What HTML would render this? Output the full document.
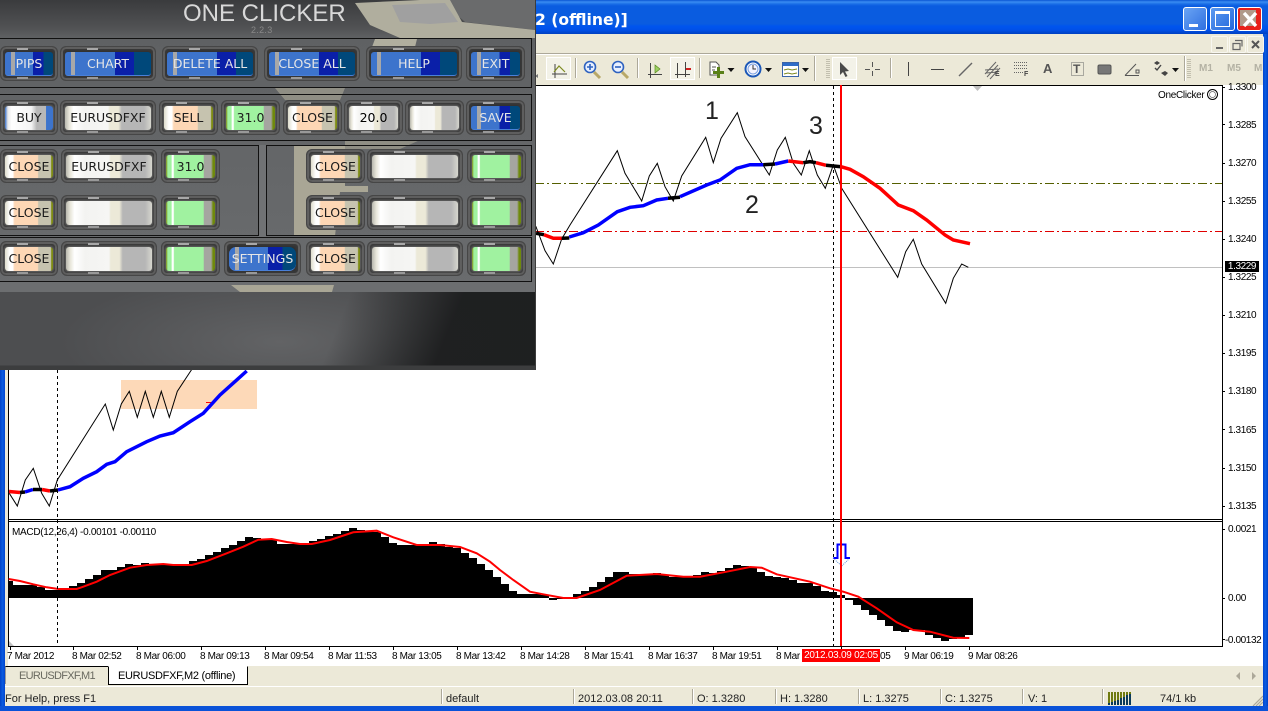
<!DOCTYPE html>
<html><head><meta charset="utf-8"><style>
html,body{margin:0;padding:0;background:#ece9d8}
body{width:1268px;height:711px;overflow:hidden;position:relative;font-family:"Liberation Sans",sans-serif;color:#000}
.a{position:absolute}
.t{position:absolute;font-size:10px;letter-spacing:-.35px;line-height:12px;white-space:nowrap}
.p{left:1228px;font-size:10px;letter-spacing:-.4px;margin-top:2px}
.s{position:absolute;top:693px;font-size:11px;line-height:13px;color:#222;white-space:nowrap}
.d{position:absolute;top:689px;height:15px;width:1px;background:#aca899;border-right:1px solid #fff}
.tog{position:absolute;top:57px;height:21px;background:#f3f2e8;border:1px solid #fff;outline:0}
.sep{position:absolute;top:58px;height:20px;width:1px;background:#aca899;border-right:1px solid #fff}
.win{position:absolute;top:7px;height:22px;border:1px solid #fff;border-radius:3px}
.mdi{position:absolute;top:36px;width:15px;height:15px;border:1px solid #f8f7f0;border-radius:2px}
.b{position:absolute;box-sizing:border-box;border-radius:6px;border:1px solid #464646;background:#2c2c2c;box-shadow:inset 0 0 0 2px #5e5e5e,inset 0 0 4px 4px #3c3c3c}
.b:before{content:"";position:absolute;left:28%;top:1px;width:11px;height:2px;background:#a8a8a8}
.b:after{content:"";position:absolute;left:28%;bottom:1px;width:11px;height:2px;background:#999}
.r1{top:46px;height:35px}.r2{top:100px;height:35px}.r3{top:149px;height:34px}.r4{top:195px;height:35px}.r5{top:241px;height:35px}
.i{position:absolute;left:4px;right:4px;top:5px;bottom:4px;border-radius:3px;text-align:center;font:12.5px/24px "DejaVu Sans",sans-serif;color:#1c1c1c;white-space:nowrap;box-sizing:border-box;box-shadow:0 0 2px 1px rgba(170,170,170,.45)}
.bl{color:#e6e6e6;background:linear-gradient(90deg,#3d74cc 0 6px,#a8a8a8 6px 10px,#3d74cc 10px 58%,#0a1fa8 58% 80%,#00487a 80% 100%);border-bottom:1px solid #4a80d8;box-shadow:none}
.wh{background:linear-gradient(90deg,#b8b8ae 0,#e8e6da 5%,#fff 10%,#f3f3f1 22%,#f6f6f4 50%,#ece9d8 52% 62%,#b6b6b6 66% 92%,#d6d6ce 100%)}
.pe{background:linear-gradient(90deg,#dedccc 0,#fff 10% 16%,#fdd7b5 20% 68%,#c6c3af 70% 95%,#7e8c14 97%)}
.gr{background:linear-gradient(90deg,#7e8c14 0,#a0f2a0 4% 11%,#fff 12% 15%,#a0f2a0 17% 76%,#a5a5a0 78% 92%,#6f8a0c 96%)}
.buy{background:linear-gradient(90deg,#3d74cc 0,#e8e8e8 6%,#fff 14%,#f4f4f4 55%,#b8b8b8 66% 85%,#3d74cc 86%)}
.fr{position:absolute;box-sizing:border-box;border:1px solid #111}
</style></head><body>

<!-- title bar -->
<div class="a" style="left:0;top:0;width:1268px;height:34px;background:linear-gradient(180deg,#0a56d4 0,#3a8cf2 2px,#1a6ee6 4px,#0a5ce0 6px,#0a5ce0 24px,#0055ee 26px,#0050e8 30px,#0040c0 34px)"></div>
<div class="a" style="left:535px;top:9px;font:bold 15.6px/22px 'DejaVu Sans',sans-serif;color:#fff;white-space:nowrap">2 (offline)]</div>

<!-- window buttons -->
<div class="win" style="left:1183px;width:22px;background:linear-gradient(135deg,#6aa4f4,#2f6fe0)"><div class="a" style="left:5px;top:16px;width:9px;height:3px;background:#fff"></div></div>
<div class="win" style="left:1210px;width:23px;background:linear-gradient(135deg,#5c9af0,#2468dc)"><div class="a" style="left:4px;top:3px;border:1px solid #fff;border-top:3px solid #fff;box-sizing:border-box;width:15px;height:16px"></div></div>
<div class="win" style="left:1237px;width:23px;background:#e8211a;overflow:hidden">
<svg class="a" style="left:0;top:0" width="23" height="22"><rect x="2" y="2" width="16" height="16" fill="#b09a8a"/><path d="M6 5L18 18M18 5L6 18" stroke="#fff" stroke-width="3.4"/></svg></div>

<!-- left/right/bottom blue -->
<div class="a" style="left:0;top:34px;width:5px;height:677px;background:linear-gradient(90deg,#0040c8,#0a5ce0 50%,#0044d0)"></div>
<div class="a" style="left:1263px;top:34px;width:5px;height:677px;background:linear-gradient(90deg,#0044d0,#0a5ce0 50%,#0040c8)"></div>
<div class="a" style="left:0;top:706px;width:1268px;height:5px;background:#0a52d8"></div>

<!-- toolbar lines -->
<div class="a" style="left:5px;top:53px;width:1258px;height:1px;background:#aca899"></div>
<div class="a" style="left:5px;top:54px;width:1258px;height:1px;background:#fff"></div>

<div class="mdi" style="left:1211px"><svg width="15" height="15"><rect x="4" y="10" width="7" height="2" fill="#666"/></svg></div>
<div class="mdi" style="left:1229px"><svg width="15" height="15"><path d="M5 3.5h7v6M3 6.5h7v6H3z" fill="none" stroke="#666" stroke-width="1.2"/></svg></div>
<div class="mdi" style="left:1247px"><svg width="15" height="15"><path d="M4 4L11 11M11 4L4 11" stroke="#555" stroke-width="2"/></svg></div>

<div class="tog" style="left:546px;width:23px"></div>
<div class="tog" style="left:670px;width:23px"></div>
<div class="tog" style="left:832px;width:23px"></div>
<div class="sep" style="left:575px"></div><div class="sep" style="left:637px"></div><div class="sep" style="left:699px"></div><div class="sep" style="left:890px"></div>
<div class="a" style="left:814px;top:56px;height:25px;width:1px;background:#aca899;border-right:1px solid #fff"></div>
<div class="a" style="left:1184px;top:56px;height:25px;width:1px;background:#aca899;border-right:1px solid #fff"></div>

<svg class="a" style="left:0;top:54px" width="1268" height="31" viewBox="0 54 1268 31">
<!-- chart mode -->
<path d="M555 64V78M552 74H567" stroke="#444" fill="none"/><path d="M554 72L559 66L565 72" stroke="#7d8a20" fill="none" stroke-width="1.2"/>
<path d="M535 76l3-2v4z" fill="#777"/>
<!-- zoom in -->
<path d="M594 72L600 78" stroke="#b8a868" stroke-width="3"/><circle cx="590" cy="67" r="5.5" fill="#e8f0ff" stroke="#2e62c0" stroke-width="1.6"/><path d="M587 67h6M590 64v6" stroke="#2e62c0" stroke-width="1.6"/>
<!-- zoom out -->
<path d="M622 72L628 78" stroke="#b8a868" stroke-width="3"/><circle cx="618" cy="67" r="5.5" fill="#e8f0ff" stroke="#2e62c0" stroke-width="1.6"/><path d="M615 67h6" stroke="#2e62c0" stroke-width="1.6"/>
<!-- autoscroll -->
<path d="M650.5 63V78M648 74.5H662" stroke="#444" fill="none"/><path d="M655 65L660 69L655 73z" fill="#9cd060" stroke="#5a8a20" stroke-width=".7"/>
<!-- shift -->
<path d="M677.5 63V78M675 74.5H690M685.5 62V77" stroke="#444" fill="none"/><path d="M686 69h5" stroke="#d02020" stroke-width="2"/>
<!-- new indicator -->
<path d="M710 62h6l3 3v10h-9z" fill="#fff" stroke="#555"/><path d="M712 67h4M712 70h3" stroke="#555"/>
<path d="M717 67h3v4h4v3h-4v4h-3v-4h-4v-3h4z" fill="#5a8018"/>
<!-- clock -->
<circle cx="753" cy="69" r="7.5" fill="#fff" stroke="#1c58b8" stroke-width="2"/><circle cx="753" cy="69" r="5" fill="#f4f4ff" stroke="#7aa0e0"/><path d="M753 65v4h3" stroke="#333" fill="none"/>
<!-- template -->
<rect x="782.500" y="62.500" width="16" height="14" fill="#fff" stroke="#3a64a8"/><rect x="783" y="63" width="15" height="3" fill="#2e6cc8"/><path d="M784 70l4-1 4 1 5-1M784 74l4-1 4 1 5-1" stroke="#7d8a20" fill="none"/>
<!-- dropdowns -->
<path d="M727.500 68h7l-3.500 4zM765 68h7l-3.500 4zM802 68h7l-3.500 4zM1172 68h7l-3.500 4z" fill="#111"/>
<!-- grips -->
<path d="M826 59.500h4M826 61.500h4M826 63.500h4M826 65.500h4M826 67.500h4M826 69.500h4M826 71.500h4M826 73.500h4M826 75.500h4M826 77.500h4M1187 59.500h4M1187 61.500h4M1187 63.500h4M1187 65.500h4M1187 67.500h4M1187 69.500h4M1187 71.500h4M1187 73.500h4M1187 75.500h4M1187 77.500h4" stroke="#c2bfae"/>
<!-- cursor -->
<path d="M840 62L840 75L843 72L845.500 77L847.500 76L845 71.500L849 71z" fill="#4a4a4a"/>
<!-- cross -->
<path d="M872.500 62v5M872.500 71v5M865 69.500h5M875 69.500h5" stroke="#555"/>
<!-- lines -->
<path d="M908.500 62v14" stroke="#444"/><path d="M931 69.500h13" stroke="#444"/><path d="M959 76L972 63" stroke="#666" stroke-width="1.400"/>
<!-- channel -->
<path d="M985 74L996 62M987 77L998 65M990 79L1000 68M985 70L998 69M986 73L998 72" stroke="#666" fill="none"/>
<!-- fib -->
<path d="M1014 62.500h14M1014 65.500h14M1014 68.500h14M1014 72.500h9" stroke="#666" stroke-dasharray="1 1"/>
<!-- text box -->
<rect x="1071.500" y="62.500" width="12" height="13" fill="none" stroke="#666" stroke-dasharray="1 1"/>
<!-- rect -->
<rect x="1098" y="65" width="13" height="9" rx="1.500" fill="#777" stroke="#555"/>
<!-- angle -->
<path d="M1125 75.500H1139M1125 75.500L1136 64" stroke="#555" fill="none"/><rect x="1136" y="70" width="3" height="3" fill="none" stroke="#555"/>
<!-- arrows -->
<path d="M1154 63l3-2 3 2-3 2zM1161 73l4-2 3 2-3 3z" fill="#444"/><path d="M1155 68l2 2 4-5" stroke="#444" fill="none" stroke-width="1.400"/>
</svg>
<div class="a" style="left:1043px;top:61px;font:bold 13px/16px 'Liberation Sans',sans-serif;color:#555">A</div>
<div class="a" style="left:1073px;top:62px;font:bold 12px/14px 'Liberation Sans',sans-serif;color:#555">T</div>
<div class="a" style="left:995px;top:71px;font:bold 7px/8px 'Liberation Sans',sans-serif;color:#444">E</div>
<div class="a" style="left:1024px;top:71px;font:bold 7px/8px 'Liberation Sans',sans-serif;color:#444">F</div>
<div class="a" style="left:1199px;top:63px;font:bold 10px/12px 'Liberation Sans',sans-serif;color:#b4b2a4">M1</div>
<div class="a" style="left:1227px;top:63px;font:bold 10px/12px 'Liberation Sans',sans-serif;color:#b4b2a4">M5</div>
<div class="a" style="left:1254px;top:63px;width:9px;overflow:hidden;font:bold 10px/12px 'Liberation Sans',sans-serif;color:#b4b2a4">M15</div>

<!-- chart surface -->
<div class="a" style="left:8px;top:85px;width:1255px;height:581px;background:#fff"></div>

<svg class="a" style="left:0;top:0" width="1268" height="711" viewBox="0 0 1268 711" fill="none">
<!-- frame -->
<g stroke="#000" shape-rendering="crispEdges">
<path d="M8.500 85.500H1222.500V646.500H8.500ZM8.500 519.500H1222.500M8.500 521.500H1222.500"/>
<path d="M1222 87.500h3M1222 124.500h3M1222 163.500h3M1222 201.500h3M1222 239.500h3M1222 277.500h3M1222 315.500h3M1222 353.500h3M1222 391.500h3M1222 429.500h3M1222 468.500h3M1222 506.500h3M1222 529.500h3M1222 598.500h3M1222 639.500h3"/>
<path d="M10.500 646v4M73.500 646v4M137.500 646v4M201.500 646v4M265.500 646v4M329.500 646v4M393.500 646v4M457.500 646v4M521.500 646v4M585.500 646v4M649.500 646v4M713.500 646v4M777.500 646v4M841.500 646v4M905.500 646v4M969.500 646v4"/>
</g>
<path d="M973 86h9l-4.500 5z" fill="#c0c0c0"/>
<path d="M9 641l5 5H9z" fill="#c0c0c0"/>

<!-- rectangle -->
<rect x="121" y="380" width="136" height="29" fill="#fdd9b8"/>
<path d="M206 402.500h8" stroke="#f00"/>

<!-- horizontal lines -->
<path d="M535 183.500H1222" stroke="#556000" stroke-dasharray="9 3 2 3" shape-rendering="crispEdges"/>
<path d="M535 231.500H1222" stroke="#e00000" stroke-dasharray="9 3 2 3" shape-rendering="crispEdges"/>
<path d="M535 267.500H1222" stroke="#c0c0c0" shape-rendering="crispEdges"/>

<!-- histogram -->
<path fill="#000" shape-rendering="crispEdges" d="M9 598V581H13V585H37V587H45V590H61V588H69V586H77V583H85V579H93V575H101V570H117V567H125V564H133V565H141V563H149V564H165V565H189V561H197V559H205V555H213V552H221V548H229V545H237V541H245V537H253V538H261V539H269V540H277V544H309V541H317V539H325V536H333V534H341V531H349V528H357V530H365V532H381V537H389V543H397V545H429V542H437V544H445V547H453V548H461V553H469V558H477V564H485V570H493V577H501V584H509V591H517V594H541V595H549V600H557V599H565V598H573V594H581V591H589V587H597V582H605V577H613V572H629V574H653V573H661V575H669V577H693V575H701V572H709V573H717V571H725V568H733V565H741V566H749V568H757V572H765V576H773V577H781V578H789V580H797V583H813V586H821V591H829V592H837V595H845V600H853V605H861V610H869V615H877V620H885V626H893V631H901V632H909V630H925V635H933V638H941V641H949V639H957V638H965V635H973V598Z"/>
<!-- signal -->
<polyline stroke="#f00" stroke-width="2" points="8.700,579 20,581 33.300,584.300 46.700,587.300 58.300,589 76.700,589 83.300,586.700 96.700,581.700 110,575 130,567.700 146.700,565 163.300,564 173.300,565 191.700,565 206.700,561 226.700,553.300 243.300,546.700 258.300,539.700 271.700,539 286.700,542 300,544 311.700,544 330,540 353.300,532.300 376.700,530.700 393.300,537.300 416.700,545 440,545 460,547 476.700,553.300 490,561.700 500,570 513.300,580 530,591.700 543.300,594.300 563.300,598 576.700,598 600,590 626.700,575.700 656.700,574 683.300,576.700 700,576.700 726.700,571.700 750,567 761.700,567.700 776.700,574.300 810,581.700 830,588.300 843.300,591.700 858.300,596.700 876.700,608.300 896.700,622.300 913.300,630 930,631.700 953.300,637.700 969.300,638"/>

<!-- price line -->
<polyline stroke="#000" stroke-width="1" points="9.300,493.300 17.300,506 25.300,480 33.300,468.300 41.700,493.300 49.300,506 57.300,480 105.300,404 113.300,430 121.300,404 129.300,391.300 137.300,417.300 145.300,391.300 153.300,417.300 161.300,391.300 169.300,417.300 177.300,391.300 190.700,371 215,335 536,226.700 545,250.700 553.300,264 561.700,239 570,225 617.300,150.700 625,173.300 641.700,201 649.300,176 657.300,163.300 665,186.700 673.300,201 681.700,176 705.700,137.300 713.300,162.700 721,138.300 737.300,112.700 745,136.700 769.300,175 777.300,150 785.300,137.300 793.300,163.300 801.300,175 809.300,150.700 817.300,175 825.300,188.300 833.300,165 841.700,188.300 897.700,277.300 905.700,251.700 913.300,239.300 921.700,264 945.700,303.300 953.300,278.300 961.700,264 968.300,267.300"/>

<!-- MA lower left -->
<g stroke-width="3.500">
<polyline stroke="#f00" points="9,491.500 20,492.500"/><polyline stroke="#000" points="20,492.500 25,492"/>
<polyline stroke="#00f" points="25,492 33,489.500"/><polyline stroke="#000" points="33,489.500 42,489.500"/>
<polyline stroke="#f00" points="42,489.500 50,491"/><polyline stroke="#000" points="50,491 58,490"/>
<polyline stroke="#00f" points="58,490 70,486.700 83.300,478.300 96.700,471.700 106.700,464.300 115,461.700 126.700,451.700 146.700,441.700 160,436 173.300,432.700 190,421.700 203.300,413.300 220,395 246.700,371"/>
<!-- MA upper -->
<polyline stroke="#000" points="536,233.300 544,234.700"/>
<polyline stroke="#f00" points="544,234.700 553.300,238.300 561.700,238.300"/>
<polyline stroke="#000" points="561.700,238.300 569.300,238"/>
<polyline stroke="#00f" points="569.300,237 583.300,232.700 598.300,225 617.300,211.700 630,207.300 643.300,205.700 656.700,200 668,198.300"/>
<polyline stroke="#000" points="668,198.300 680,197.300"/>
<polyline stroke="#00f" points="680,196.700 706.700,185 720,180 736.700,168.300 750,164.700 763.300,164.700"/>
<polyline stroke="#000" points="763.300,164.700 775,164"/>
<polyline stroke="#00f" points="775,164 788.300,161"/>
<polyline stroke="#f00" points="788.300,161 803.300,162.700"/>
<polyline stroke="#000" points="803.300,162.700 810,161.700 816,162.700"/>
<polyline stroke="#f00" points="816,162.700 826,165.300"/>
<polyline stroke="#000" points="826,165.300 841,166.700"/>
<polyline stroke="#f00" points="841,166.700 850,169.300 863.300,176.700 880,188.300 898.300,205 913.300,210.700 926.700,220 945,235 953.300,240 970,243.700"/>
</g>

<!-- verticals -->
<path d="M57.500 370V646" stroke="#000" stroke-dasharray="3 3" shape-rendering="crispEdges"/>
<path d="M833.500 86V646" stroke="#000" stroke-dasharray="3 3" shape-rendering="crispEdges"/>
<path d="M833 558L841.700 566L850 558" stroke="#6699dd" stroke-dasharray="1 1"/>
<path d="M833.500 558H837.500V544.500H845.500V558H850" stroke="#00f" stroke-width="2"/>
<path d="M841 85V646" stroke="#f00" stroke-width="2" shape-rendering="crispEdges"/>

<!-- smiley -->
<circle cx="1212.500" cy="94.500" r="5" stroke="#000"/><circle cx="1212.500" cy="94.500" r="3" stroke="#666" stroke-width=".7"/>
</svg>

<!-- big digits -->
<div class="a" style="left:705px;top:97px;font-size:25px;line-height:28px;color:#222">1</div>
<div class="a" style="left:745px;top:191px;font-size:25px;line-height:28px;color:#222">2</div>
<div class="a" style="left:809px;top:112px;font-size:25px;line-height:28px;color:#222">3</div>
<div class="t" style="left:1158px;top:90px;letter-spacing:-.3px">OneClicker</div>
<div class="t" style="left:12px;top:527px;letter-spacing:-.3px">MACD(12,26,4) -0.00101 -0.00110</div>

<!-- price axis -->
<div class="t p" style="top:80px">1.3300</div><div class="t p" style="top:118px">1.3285</div><div class="t p" style="top:156px">1.3270</div><div class="t p" style="top:194px">1.3255</div><div class="t p" style="top:232px">1.3240</div><div class="t p" style="top:270px">1.3225</div><div class="t p" style="top:308px">1.3210</div><div class="t p" style="top:346px">1.3195</div><div class="t p" style="top:384px">1.3180</div><div class="t p" style="top:423px">1.3165</div><div class="t p" style="top:461px">1.3150</div><div class="t p" style="top:499px">1.3135</div>
<div class="t p" style="top:522px">0.0021</div><div class="t p" style="top:591px">0.00</div><div class="t p" style="left:1225px;top:633px">-0.00132</div>
<div class="t" style="left:1225px;top:261px;width:34px;height:11px;line-height:11px;background:#000;color:#fff;text-align:center;letter-spacing:-.4px">1.3229</div>

<!-- time axis -->
<div class="t" style="left:7px;top:651px">7 Mar 2012</div><div class="t" style="left:72px;top:651px">8 Mar 02:52</div><div class="t" style="left:136px;top:651px">8 Mar 06:00</div><div class="t" style="left:200px;top:651px">8 Mar 09:13</div><div class="t" style="left:264px;top:651px">8 Mar 09:54</div><div class="t" style="left:328px;top:651px">8 Mar 11:53</div><div class="t" style="left:392px;top:651px">8 Mar 13:05</div><div class="t" style="left:456px;top:651px">8 Mar 13:42</div><div class="t" style="left:520px;top:651px">8 Mar 14:28</div><div class="t" style="left:584px;top:651px">8 Mar 15:41</div><div class="t" style="left:648px;top:651px">8 Mar 16:37</div><div class="t" style="left:712px;top:651px">8 Mar 19:51</div><div class="t" style="left:776px;top:651px">8 Mar</div><div class="t" style="left:880px;top:651px">05</div><div class="t" style="left:904px;top:651px">9 Mar 06:19</div><div class="t" style="left:968px;top:651px">9 Mar 08:26</div>
<div class="t" style="left:802px;top:649px;width:78px;height:13px;line-height:13px;background:#f00;color:#fff;text-align:center;letter-spacing:-.25px">2012.03.09 02:05</div>

<!-- tabs -->
<div class="a" style="left:5px;top:666px;width:1258px;height:21px;background:#ece9d8;border-bottom:1px solid #fff;box-sizing:border-box"></div>
<div class="a" style="left:5px;top:666px;width:103px;height:18px;border-left:1px solid #999;border-top:1px solid #000;box-sizing:border-box;font-size:11px;line-height:19px;color:#6a6a60;padding-left:13px;letter-spacing:-.7px;white-space:nowrap">EURUSDFXF,M1</div>
<div class="a" style="left:108px;top:666px;width:140px;height:19px;background:#fff;border:1px solid #000;border-top:1px solid #fff;box-sizing:border-box;font-size:11px;line-height:18px;padding-left:9px;letter-spacing:-.3px;white-space:nowrap">EURUSDFXF,M2 (offline)</div>
<svg class="a" style="left:1232px;top:670px" width="28" height="12"><path d="M8 2v8l-4-4zM20 2v8l4-4z" fill="#aca899"/></svg>

<!-- status bar -->
<div class="s" style="left:5px">For Help, press F1</div><div class="d" style="left:441px"></div>
<div class="s" style="left:446px">default</div><div class="d" style="left:573px"></div>
<div class="s" style="left:578px">2012.03.08 20:11</div><div class="d" style="left:692px"></div>
<div class="s" style="left:697px">O: 1.3280</div><div class="d" style="left:775px"></div>
<div class="s" style="left:780px">H: 1.3280</div><div class="d" style="left:858px"></div>
<div class="s" style="left:863px">L: 1.3275</div><div class="d" style="left:940px"></div>
<div class="s" style="left:945px">C: 1.3275</div><div class="d" style="left:1022px"></div>
<div class="s" style="left:1028px">V: 1</div><div class="d" style="left:1102px"></div>
<div class="s" style="left:1160px">74/1 kb</div>
<svg class="a" style="left:1108px;top:692px" width="24" height="13" shape-rendering="crispEdges">
<path d="M1 0v11M4 0v10M7 0v9M10 0v8M13 0v6M16 0v5M19 0v3M22 0v2" stroke="#6f7a10" stroke-width="2"/>
<path d="M1 11v2M4 10v3M7 9v4M10 8v5M13 6v7M16 5v8M19 3v10M22 2v11" stroke="#0a3a5a" stroke-width="2"/>
</svg>
<svg class="a" style="left:1252px;top:695px" width="11" height="11"><path d="M1 11L11 1M4 11L11 4M7 11L11 7" stroke="#aca899" stroke-width="1.200"/></svg>

<!-- ONE CLICKER PANEL -->
<div class="a" style="left:0;top:0;width:535px;height:370px;overflow:hidden;background:linear-gradient(180deg,#3a3b3d 0,#515254 28px,#5f6163 38px,#66686a 200px,#6a6c6e 292px);border-right:1px solid #3c3c3c;box-sizing:content-box">
<svg class="a" style="left:0;top:0" width="535" height="292">
<polygon fill="#6a6b6c" points="440,0 535,0 535,30 465,22"/>
<polygon fill="#b0ae9e" points="355,3 420,0 450,0 462,22 535,30 535,38 400,38 370,25"/>
<polygon fill="#a0a0a0" points="392,5 445,3 458,22 430,24 400,22"/>
<polygon fill="#b0ae9e" points="375,39 417,39 415,47 372,47"/>
<polygon fill="#8f8e84" points="275,88 345,88 340,100 285,100"/>
<polygon fill="#a9a695" points="294,146 345,146 345,186 368,186 368,192 340,192 335,236 294,236"/>
<polygon fill="#8f8e84" points="345,140 420,140 400,149 345,149"/>
<rect x="0" y="282" width="535" height="10" fill="#6c6e70"/>
<polygon fill="#a9a695" points="231,285 334,285 332,292 240,292"/>
<rect x="258" y="145" width="8" height="92" fill="#707274"/>
</svg>
<div class="a" style="left:0;top:292px;width:535px;height:78px;background:linear-gradient(180deg,transparent 0,transparent 73px,#3c3d3e 74px),linear-gradient(112deg,rgba(0,0,0,0) 62%,rgba(28,29,30,.95) 82%),radial-gradient(ellipse 220px 70px at 280px 50px,#626365,#4d4e50)"></div>
<div class="a" style="left:183px;top:-1px;width:160px;text-align:center;font:24px/30px 'Liberation Sans',sans-serif;color:#d8d8d8;white-space:nowrap;letter-spacing:0">ONE CLICKER</div>
<div class="a" style="left:251px;top:25px;font:9px/11px 'Liberation Sans',sans-serif;color:#888;letter-spacing:.3px">2.2.3</div>

<div class="fr" style="left:-2px;top:38px;width:534px;height:50px"></div>
<div class="fr" style="left:-2px;top:94px;width:534px;height:47px"></div>
<div class="fr" style="left:-2px;top:145px;width:261px;height:91px"></div>
<div class="fr" style="left:266px;top:145px;width:266px;height:91px"></div>
<div class="fr" style="left:-2px;top:237px;width:534px;height:45px"></div>

<!-- row 1 -->
<div class="b r1" style="left:0;width:58px"><div class="i bl">PIPS</div></div>
<div class="b r1" style="left:60px;width:96px"><div class="i bl">CHART</div></div>
<div class="b r1" style="left:162px;width:96px"><div class="i bl">DELETE ALL</div></div>
<div class="b r1" style="left:264px;width:96px"><div class="i bl">CLOSE ALL</div></div>
<div class="b r1" style="left:366px;width:96px"><div class="i bl">HELP</div></div>
<div class="b r1" style="left:466px;width:59px"><div class="i bl">EXIT</div></div>
<!-- row 2 -->
<div class="b r2" style="left:0;width:58px"><div class="i buy">BUY</div></div>
<div class="b r2" style="left:60px;width:96px"><div class="i wh">EURUSDFXF</div></div>
<div class="b r2" style="left:159px;width:59px"><div class="i pe">SELL</div></div>
<div class="b r2" style="left:221px;width:59px"><div class="i gr">31.0</div></div>
<div class="b r2" style="left:283px;width:59px"><div class="i pe">CLOSE</div></div>
<div class="b r2" style="left:344px;width:59px"><div class="i wh" style="color:#000">20.0</div></div>
<div class="b r2" style="left:405px;width:59px"><div class="i wh"></div></div>
<div class="b r2" style="left:466px;width:59px"><div class="i bl">SAVE</div></div>
<!-- row 3 -->
<div class="b r3" style="left:0;width:58px"><div class="i pe">CLOSE</div></div>
<div class="b r3" style="left:61px;width:96px"><div class="i wh">EURUSDFXF</div></div>
<div class="b r3" style="left:161px;width:59px"><div class="i gr">31.0</div></div>
<div class="b r3" style="left:306px;width:59px"><div class="i pe">CLOSE</div></div>
<div class="b r3" style="left:367px;width:96px"><div class="i wh"></div></div>
<div class="b r3" style="left:467px;width:59px"><div class="i gr"></div></div>
<!-- row 4 -->
<div class="b r4" style="left:0;width:58px"><div class="i pe">CLOSE</div></div>
<div class="b r4" style="left:61px;width:96px"><div class="i wh"></div></div>
<div class="b r4" style="left:161px;width:59px"><div class="i gr"></div></div>
<div class="b r4" style="left:306px;width:59px"><div class="i pe">CLOSE</div></div>
<div class="b r4" style="left:367px;width:96px"><div class="i wh"></div></div>
<div class="b r4" style="left:467px;width:59px"><div class="i gr"></div></div>
<!-- row 5 -->
<div class="b r5" style="left:0;width:58px"><div class="i pe">CLOSE</div></div>
<div class="b r5" style="left:61px;width:96px"><div class="i wh"></div></div>
<div class="b r5" style="left:161px;width:59px"><div class="i gr"></div></div>
<div class="b r5" style="left:224px;width:77px"><div class="i bl" style="border-radius:7px">SETTINGS</div></div>
<div class="b r5" style="left:306px;width:59px"><div class="i pe">CLOSE</div></div>
<div class="b r5" style="left:367px;width:96px"><div class="i wh"></div></div>
<div class="b r5" style="left:467px;width:59px"><div class="i gr"></div></div>
</div>
</body></html>
